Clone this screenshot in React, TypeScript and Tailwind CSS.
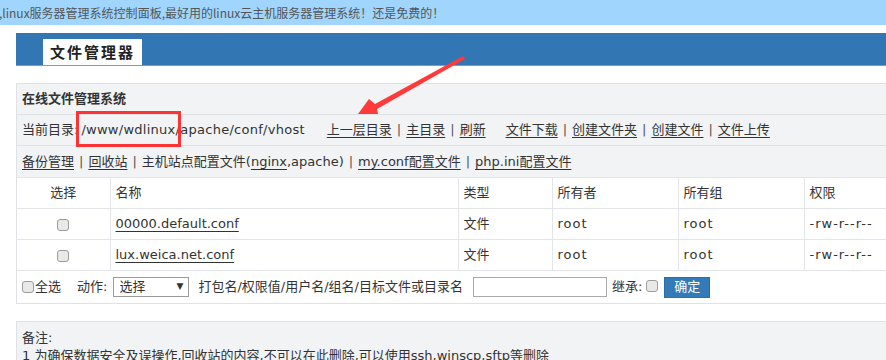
const font = 'font-["DejaVu_Sans","Noto_Sans_CJK_SC",sans-serif]';

function Box() {
  return <span className="inline-block w-[12px] h-[12px] rounded-[3px] border border-[#9c9c9c] bg-[#e9e9e9] align-middle" />;
}

function Sep() {
  return <span className="mx-[5px] text-[#555]">|</span>;
}

function L({ children }: { children: React.ReactNode }) {
  return <span className="underline underline-offset-[3px] text-[#333]">{children}</span>;
}

const rows = [
  { name: '00000.default.conf' },
  { name: 'lux.weica.net.conf' },
];

const cell = 'border-r border-[#e3e5e8] pl-[5px] text-left font-normal';

export default function App() {
  return (
    <div className={`relative w-[886px] h-[360px] overflow-hidden bg-white text-[13px] text-[#333] ${font}`}>
      <div className="h-[25px] bg-[#a0d6fe] text-[12px] leading-[25px] text-[#555] whitespace-nowrap -ml-[1px] font-['Noto_Sans_CJK_SC',sans-serif]">
        ,linux服务器管理系统控制面板,最好用的linux云主机服务器管理系统！还是免费的！
      </div>

      <div className="mt-[8px] ml-[16px] w-[900px] h-[33px] bg-[#3277b3] border-b border-[#5aa8da] flex items-end">
        <div className="ml-[27px] w-[99px] h-[26px] bg-white flex items-center justify-center text-[15px] font-bold tracking-[2px] text-[#222] font-['Noto_Sans_CJK_SC',sans-serif]">
          文件管理器
        </div>
      </div>

      <div className="mt-[17px] ml-[16px] w-[900px] border border-[#dfe1e5] bg-[#f2f3f5]">
        <div className="h-[31px] flex items-center px-[5px] font-bold border-b border-[#dfe1e5]">在线文件管理系统</div>
        <div className="h-[31px] flex items-center px-[5px] border-b border-[#dfe1e5] whitespace-nowrap">
          <span>当前目录:</span>
          <span className="ml-[3px] tracking-[0.27px]">/www/wdlinux/apache/conf/vhost</span>
          <span className="ml-[22px]"><L>上一层目录</L><Sep /><L>主目录</L><Sep /><L>刷新</L></span>
          <span className="ml-[20px]"><L>文件下载</L><Sep /><L>创建文件夹</L><Sep /><L>创建文件</L><Sep /><L>文件上传</L></span>
        </div>
        <div className="h-[31px] flex items-center px-[5px] whitespace-nowrap">
          <L>备份管理</L><Sep /><L>回收站</L><Sep />
          <span>主机站点配置文件(<L>nginx</L>,apache)</span><Sep />
          <L>my.conf配置文件</L><Sep /><L>php.ini配置文件</L>
        </div>
        <table className="w-full bg-white border-collapse table-fixed">
          <colgroup>
            <col className="w-[93px]" />
            <col className="w-[348px]" />
            <col className="w-[94px]" />
            <col className="w-[126px]" />
            <col className="w-[126px]" />
            <col />
          </colgroup>
          <thead>
            <tr className="h-[31px] border-y border-[#e3e5e8]">
              <th className="border-r border-[#e3e5e8] font-normal text-center">选择</th>
              <th className={cell}>名称</th>
              <th className={cell}>类型</th>
              <th className={cell}>所有者</th>
              <th className={cell}>所有组</th>
              <th className={cell}>权限</th>
            </tr>
          </thead>
          <tbody>
            {rows.map(r => (
              <tr key={r.name} className="h-[31px] border-b border-[#e3e5e8]">
                <td className="border-r border-[#e3e5e8] text-center"><Box /></td>
                <td className={cell}><L>{r.name}</L></td>
                <td className={cell}>文件</td>
                <td className={`${cell} tracking-[1px]`}>root</td>
                <td className={`${cell} tracking-[1px]`}>root</td>
                <td className={`${cell} tracking-[1px]`}>-rw-r--r--</td>
              </tr>
            ))}
          </tbody>
        </table>
        <div className="h-[32px] bg-white flex items-center pl-[5px] whitespace-nowrap">
          <Box />
          <span className="ml-[1px]">全选</span>
          <span className="ml-[16px]">动作:</span>
          <div className="ml-[6px] w-[76px] h-[20px] border border-[#9a9a9a] flex items-center justify-between px-[5px]">
            <span>选择</span>
            <span className="text-[9px]">▼</span>
          </div>
          <span className="ml-[9px]">打包名/权限值/用户名/组名/目标文件或目录名</span>
          <div className="ml-[10px] w-[134px] h-[20px] border border-[#a9a9a9]" />
          <span className="ml-[5px]">继承:</span>
          <span className="ml-[4px] -mt-[4px]"><Box /></span>
          <div className="ml-[6px] w-[46px] h-[21px] bg-[#337ab7] border border-[#2e6da4] text-white flex items-center justify-center">确定</div>
        </div>
      </div>

      <div className="mt-[17px] ml-[16px] w-[900px] h-[60px] border border-[#dfe1e5] bg-[#f2f3f5] px-[5px] pt-[7px] leading-[18px]">
        <div>备注:</div>
        <div>1 为确保数据安全及误操作,回收站的内容,不可以在此删除,可以使用ssh,winscp,sftp等删除</div>
      </div>

      <div className="absolute left-[76px] top-[111px] w-[105px] h-[36px] border-[3px] border-[#ff3333]" />
      <svg className="absolute left-0 top-0" width="886" height="360" viewBox="0 0 886 360">
        <polygon points="463,56 375,104 369,99 358,114 378,114 377,109 465,59" fill="#ff3a3a" />
      </svg>
    </div>
  );
}
